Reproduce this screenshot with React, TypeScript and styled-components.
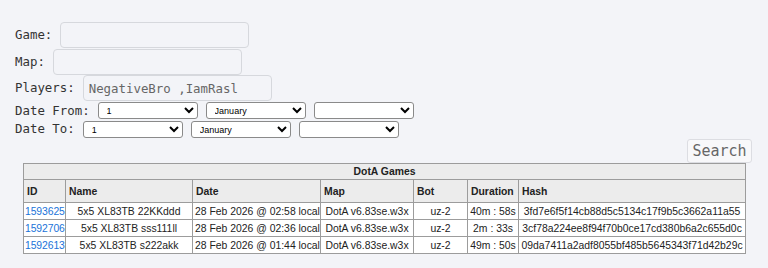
import React from "react";
import styled, { createGlobalStyle } from "styled-components";

interface Game {
  id: string;
  name: string;
  date: string;
  map: string;
  bot: string;
  duration: string;
  hash: string;
}

const games: Game[] = [
  {
    id: "1593625",
    name: "5x5 XL83TB 22KKddd",
    date: "28 Feb 2026 @ 02:58 local",
    map: "DotA v6.83se.w3x",
    bot: "uz-2",
    duration: "40m : 58s",
    hash: "3fd7e6f5f14cb88d5c5134c17f9b5c3662a11a55",
  },
  {
    id: "1592706",
    name: "5x5 XL83TB sss111ll",
    date: "28 Feb 2026 @ 02:36 local",
    map: "DotA v6.83se.w3x",
    bot: "uz-2",
    duration: "2m : 33s",
    hash: "3cf78a224ee8f94f70b0ce17cd380b6a2c655d0c",
  },
  {
    id: "1592613",
    name: "5x5 XL83TB s222akk",
    date: "28 Feb 2026 @ 01:44 local",
    map: "DotA v6.83se.w3x",
    bot: "uz-2",
    duration: "49m : 50s",
    hash: "09da7411a2adf8055bf485b5645343f71d42b29c",
  },
];

const columns = [
  { title: "ID", width: 42 },
  { title: "Name", width: 127 },
  { title: "Date", width: 128 },
  { title: "Map", width: 93 },
  { title: "Bot", width: 54 },
  { title: "Duration", width: 51 },
  { title: "Hash", width: 227 },
];

export default function App() {
  return (
    <>
      <GlobalStyle />
      <Page>
        <Form>
          <Row height={27}>
            <Label>Game:</Label>
            <TextInput />
          </Row>
          <Row height={26}>
            <Label>Map:</Label>
            <TextInput />
          </Row>
          <Row height={27}>
            <Label>Players:</Label>
            <TextInput defaultValue="NegativeBro ,IamRasl" />
          </Row>
          <Row height={19}>
            <Label>Date From:</Label>
            <DateSelects />
          </Row>
          <Row height={17}>
            <Label>Date To:</Label>
            <DateSelects />
          </Row>
        </Form>
        <SearchBar>
          <SearchButton>Search</SearchButton>
        </SearchBar>
        <Table>
          <colgroup>
            {columns.map((c) => (
              <col key={c.title} style={{ width: c.width }} />
            ))}
          </colgroup>
          <thead>
            <tr>
              <Caption colSpan={columns.length}>DotA Games</Caption>
            </tr>
            <tr>
              {columns.map((c) => (
                <HeadCell key={c.title}>{c.title}</HeadCell>
              ))}
            </tr>
          </thead>
          <tbody>
            {games.map((g) => (
              <tr key={g.id}>
                <IdCell>
                  <GameLink href="#">{g.id}</GameLink>
                </IdCell>
                <Cell>{g.name}</Cell>
                <Cell align="left">{g.date}</Cell>
                <Cell>{g.map}</Cell>
                <Cell>{g.bot}</Cell>
                <Cell>{g.duration}</Cell>
                <Cell>{g.hash}</Cell>
              </tr>
            ))}
          </tbody>
        </Table>
      </Page>
    </>
  );
}

function DateSelects() {
  return (
    <>
      <Select defaultValue="1">
        <option>1</option>
      </Select>
      <Select defaultValue="January">
        <option>January</option>
      </Select>
      <Select defaultValue="">
        <option value=""></option>
      </Select>
    </>
  );
}

const mono = `"DejaVu Sans Mono", "Liberation Mono", monospace`;
const sans = `"Liberation Sans", Arial, sans-serif`;

const GlobalStyle = createGlobalStyle`
  body {
    margin: 0;
    background: #f3f4f8;
  }
`;

const Page = styled.div`
  padding: 22px 16px 0 15px;
  width: 768px;
  height: 268px;
  box-sizing: border-box;
`;

const Form = styled.div`
  display: flex;
  flex-direction: column;
`;

const Row = styled.div<{ height: number }>`
  display: flex;
  align-items: flex-start;
  gap: 8px;
  height: ${(p) => p.height}px;
`;

const Label = styled.span`
  font-family: ${mono};
  font-size: 12.4px;
  color: #333;
  align-self: center;
  line-height: 1;
`;

const TextInput = styled.input`
  width: 189px;
  height: 26px;
  box-sizing: border-box;
  border: 1px solid #d6d8dd;
  border-radius: 4px;
  background: #f3f4f8;
  padding: 0 5px;
  font-family: ${mono};
  font-size: 12.4px;
  color: #666;
  outline: none;
`;

const Select = styled.select`
  width: 100px;
  height: 17px;
  box-sizing: border-box;
  font-family: ${sans};
  font-size: 9px;
  color: #000;
  background: #fff;
  border: 1px solid #8a8a8a;
  border-radius: 3px;
  padding: 0 4px;
`;

const SearchBar = styled.div`
  display: flex;
  justify-content: flex-end;
  margin-top: 1px;
`;

const SearchButton = styled.button`
  width: 65px;
  height: 24px;
  box-sizing: border-box;
  font-family: ${mono};
  font-size: 15px;
  color: #666;
  background: #f8f8fa;
  border: 1px solid #dcdde2;
  border-radius: 3px;
  padding: 0;
`;

const Table = styled.table`
  margin-left: 8px;
  width: 722px;
  table-layout: fixed;
  border-collapse: collapse;
  border: 1px solid #9c9c9c;
  font-family: ${sans};
  font-size: 10.4px;
  color: #222;
`;

const Caption = styled.th`
  height: 15px;
  padding: 0;
  background: #ececec;
  border: 1px solid #9c9c9c;
  font-weight: bold;
  text-align: center;
`;

const HeadCell = styled.th`
  height: 22px;
  padding: 0 3px;
  background: #ececec;
  border: 1px solid #9c9c9c;
  font-weight: bold;
  text-align: left;
  white-space: nowrap;
  overflow: hidden;
`;

const Cell = styled.td<{ align?: "left" | "center" }>`
  height: 16px;
  padding: 0 2px;
  background: #fff;
  border: 1px solid #9c9c9c;
  text-align: ${(p) => p.align ?? "center"};
  white-space: nowrap;
`;

const IdCell = styled(Cell)`
  padding: 0 0 0 1px;
  text-align: left;
  letter-spacing: -0.1px;
`;

const GameLink = styled.a`
  color: #1a73d9;
  text-decoration: none;
`;
